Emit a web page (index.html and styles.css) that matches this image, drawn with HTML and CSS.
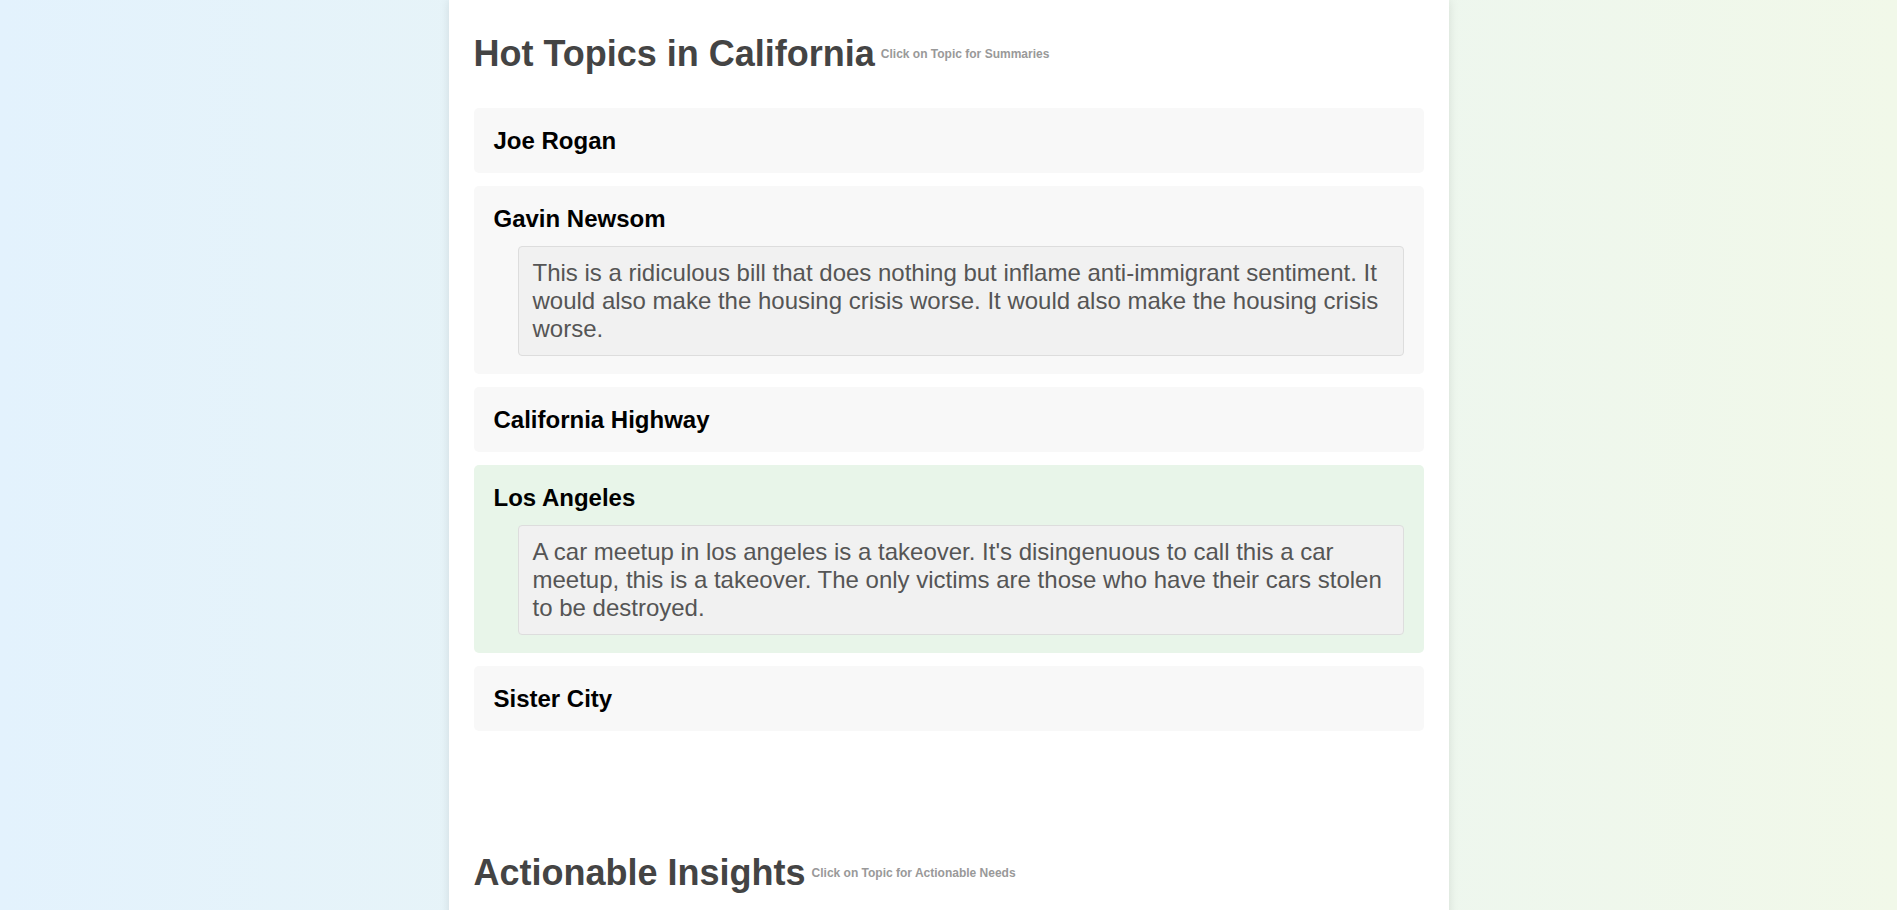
FILE: index.html
```html
<!DOCTYPE html>
<html lang="en">
<head>
<meta charset="utf-8">
<title>Hot Topics in California</title>
<link rel="stylesheet" href="styles.css">
</head>
<body>
<div class="page">
  <section class="section">
    <h1 class="section-title">Hot Topics in California<span class="section-hint">Click on Topic for Summaries</span></h1>
    <ul class="topics">
      <li class="topic"><h3 class="topic-name">Joe Rogan</h3></li>
      <li class="topic">
        <h3 class="topic-name">Gavin Newsom</h3>
        <div class="summary">This is a ridiculous bill that does nothing but inflame anti-immigrant sentiment. It would also make the housing crisis worse. It would also make the housing crisis worse.</div>
      </li>
      <li class="topic"><h3 class="topic-name">California Highway</h3></li>
      <li class="topic topic-active">
        <h3 class="topic-name">Los Angeles</h3>
        <div class="summary">A car meetup in los angeles is a takeover. It's disingenuous to call this a car meetup, this is a takeover. The only victims are those who have their cars stolen to be destroyed.</div>
      </li>
      <li class="topic"><h3 class="topic-name">Sister City</h3></li>
    </ul>
  </section>
  <section class="section section-next">
    <h1 class="section-title">Actionable Insights<span class="section-hint">Click on Topic for Actionable Needs</span></h1>
  </section>
</div>
</body>
</html>
```
FILE: styles.css
```css
html, body {
  margin: 0;
  padding: 0;
}
body {
  font-family: "Liberation Sans", Arial, sans-serif;
  background: linear-gradient(to right, #e3f2fd, #f1f8e9);
  min-height: 100vh;
}
.page {
  max-width: 1000px;
  margin: 0 auto;
  background: #fff;
  box-shadow: 0 0 10px rgba(0, 0, 0, 0.1);
  padding: 33px 25px 40px;
  box-sizing: border-box;
  min-height: 1000px;
}
.section-title {
  font-size: 36px;
  font-weight: bold;
  color: #444;
  margin: 0 0 33px;
  line-height: normal;
}
.section-hint {
  font-size: 12px;
  color: #999;
  font-weight: bold;
  margin-left: 6px;
  vertical-align: 8px;
}
.topics {
  list-style: none;
  margin: 0;
  padding: 0;
  display: flex;
  flex-direction: column;
  gap: 13px;
}
.topic {
  background: #f8f8f8;
  border-radius: 5px;
  padding: 19px 20px 18px;
}
.topic-active {
  background: #e8f5e9;
}
.topic-name {
  margin: 0;
  font-size: 24px;
  font-weight: bold;
  color: #000;
  line-height: normal;
}
.summary {
  margin: 13px 0 0 24px;
  padding: 12px 14px;
  background: #f1f1f1;
  border: 1px solid #ddd;
  border-radius: 4px;
  font-size: 24px;
  color: #555;
  line-height: normal;
}
.section-next {
  margin-top: 121px;
}
```
